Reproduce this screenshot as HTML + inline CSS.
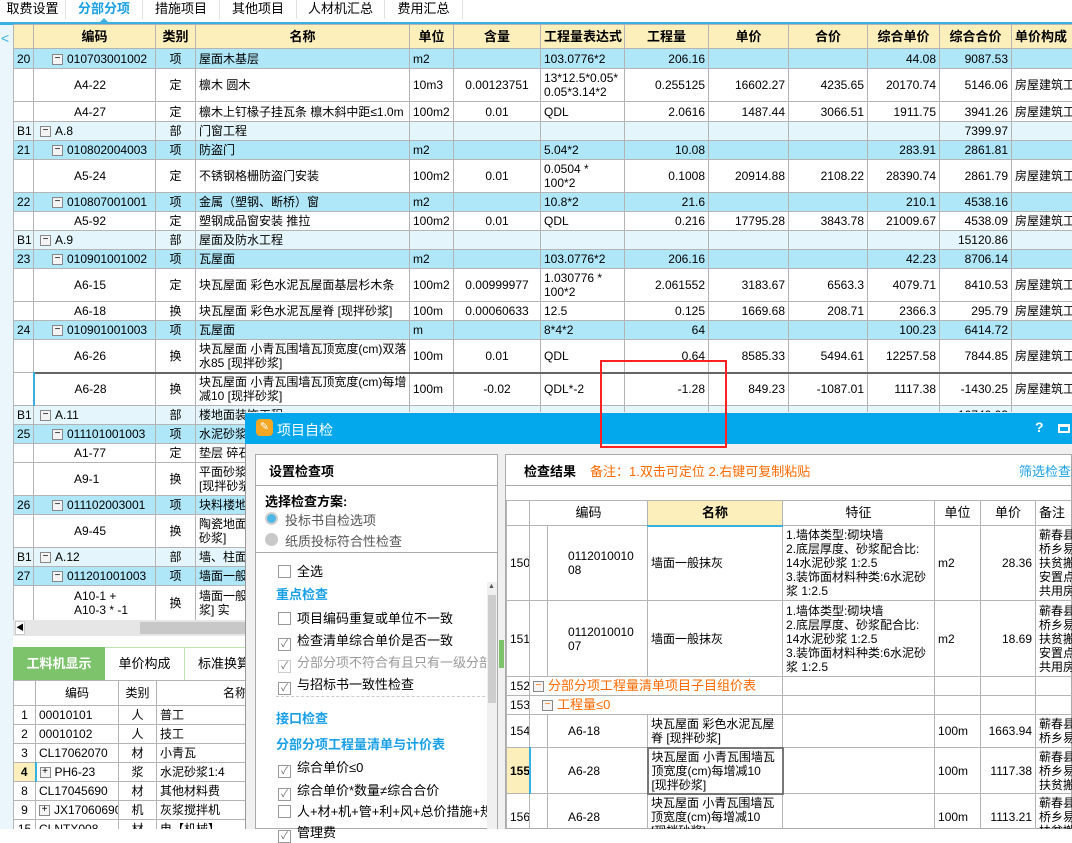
<!DOCTYPE html>
<html><head><meta charset="utf-8">
<style>
*{margin:0;padding:0;box-sizing:border-box}
body{width:1072px;height:829px;overflow:hidden;background:#fff;font-family:"Liberation Sans","Noto Sans CJK SC",sans-serif;font-size:12px;color:#000;position:relative}
.a{position:absolute}
table{border-collapse:collapse;table-layout:fixed}
td{border:1px solid #b4b4b4;padding:0 3px;white-space:nowrap;overflow:hidden;line-height:14px;vertical-align:middle}
.r{text-align:right}.c{text-align:center}
.hd td{background:#fdefbb;font-weight:bold;text-align:center;font-size:13px}
.x td{background:#afe6f8}
.b td{background:#e4f6fb}
.bx{display:inline-block;width:11px;height:11px;border:1px solid #888;background:#f4f4f4;font-size:10px;line-height:8px;text-align:center;vertical-align:middle;margin-right:4px}
.tab{position:absolute;top:0;height:19px;font-size:13px;text-align:center;line-height:17px;border-right:1px solid #e0e0e0}
.cb{display:inline-block;width:13px;height:13px;border:1px solid #999;background:#fff;vertical-align:-2px;margin-right:6px;font-size:10px;line-height:11px;text-align:center;color:#666}
.li{position:absolute;left:278px;font-size:13px}
.bl{position:absolute;left:276px;font-size:13px;font-weight:bold;color:#1aa0e6}
</style></head><body>
<div class="a" style="left:0;top:0;width:1072px;height:22px;background:#fff"></div>
<div class="tab" style="left:0;width:66px">取费设置</div>
<div class="tab" style="left:66px;width:77px;color:#1aa0e6;font-weight:bold">分部分项</div>
<div class="tab" style="left:143px;width:77px">措施项目</div>
<div class="tab" style="left:220px;width:77px">其他项目</div>
<div class="tab" style="left:297px;width:88px">人材机汇总</div>
<div class="tab" style="left:385px;width:78px">费用汇总</div>
<div class="a" style="left:0;top:22px;width:1072px;height:3px;background:#3ab0e0"></div>
<div class="a" style="left:99px;top:18px;width:0;height:0;border-left:5px solid transparent;border-right:5px solid transparent;border-bottom:5px solid #3ab0e0"></div>
<div class="a" style="left:0;top:25px;width:13px;height:804px;background:#eaf6fb"></div>
<div class="a" style="left:1px;top:30px;color:#3ab0e0;font-size:14px">&lt;</div>

<div class="a" style="left:13px;top:24px;width:1059px;height:612px;overflow:hidden">
<table style="width:1110px">
<colgroup><col style="width:20px"><col style="width:122px"><col style="width:40px"><col style="width:214px"><col style="width:44px"><col style="width:87px"><col style="width:84px"><col style="width:84px"><col style="width:80px"><col style="width:79px"><col style="width:72px"><col style="width:72px"><col style="width:132px"></colgroup>
<tr class="hd" style="height:24px"><td></td><td>编码</td><td>类别</td><td>名称</td><td>单位</td><td>含量</td><td>工程量表达式</td><td>工程量</td><td>单价</td><td>合价</td><td>综合单价</td><td>综合合价</td><td style="text-align:left">单价构成</td></tr>
<tr class="x" style="height:20px"><td>20</td><td style="padding-left:18px"><span class="bx">−</span>010703001002</td><td class="c">项</td><td>屋面木基层</td><td>m2</td><td></td><td>103.0776*2</td><td class="r">206.16</td><td></td><td></td><td class="r">44.08</td><td class="r">9087.53</td><td></td></tr>
<tr style="height:33px"><td></td><td style="padding-left:40px">A4-22</td><td class="c">定</td><td>檩木 圆木</td><td>10m3</td><td class="c">0.00123751</td><td>13*12.5*0.05*<br>0.05*3.14*2</td><td class="r">0.255125</td><td class="r">16602.27</td><td class="r">4235.65</td><td class="r">20170.74</td><td class="r">5146.06</td><td>房屋建筑工</td></tr>
<tr style="height:20px"><td></td><td style="padding-left:40px">A4-27</td><td class="c">定</td><td>檩木上钉椽子挂瓦条 檩木斜中距≤1.0m</td><td>100m2</td><td class="c">0.01</td><td>QDL</td><td class="r">2.0616</td><td class="r">1487.44</td><td class="r">3066.51</td><td class="r">1911.75</td><td class="r">3941.26</td><td>房屋建筑工</td></tr>
<tr class="b" style="height:19px"><td>B1</td><td style="padding-left:6px"><span class="bx">−</span>A.8</td><td class="c">部</td><td>门窗工程</td><td></td><td></td><td></td><td></td><td></td><td></td><td></td><td class="r">7399.97</td><td></td></tr>
<tr class="x" style="height:19px"><td>21</td><td style="padding-left:18px"><span class="bx">−</span>010802004003</td><td class="c">项</td><td>防盗门</td><td>m2</td><td></td><td>5.04*2</td><td class="r">10.08</td><td></td><td></td><td class="r">283.91</td><td class="r">2861.81</td><td></td></tr>
<tr style="height:33px"><td></td><td style="padding-left:40px">A5-24</td><td class="c">定</td><td>不锈钢格栅防盗门安装</td><td>100m2</td><td class="c">0.01</td><td>0.0504 *<br>100*2</td><td class="r">0.1008</td><td class="r">20914.88</td><td class="r">2108.22</td><td class="r">28390.74</td><td class="r">2861.79</td><td>房屋建筑工</td></tr>
<tr class="x" style="height:19px"><td>22</td><td style="padding-left:18px"><span class="bx">−</span>010807001001</td><td class="c">项</td><td>金属（塑钢、断桥）窗</td><td>m2</td><td></td><td>10.8*2</td><td class="r">21.6</td><td></td><td></td><td class="r">210.1</td><td class="r">4538.16</td><td></td></tr>
<tr style="height:19px"><td></td><td style="padding-left:40px">A5-92</td><td class="c">定</td><td>塑钢成品窗安装 推拉</td><td>100m2</td><td class="c">0.01</td><td>QDL</td><td class="r">0.216</td><td class="r">17795.28</td><td class="r">3843.78</td><td class="r">21009.67</td><td class="r">4538.09</td><td>房屋建筑工</td></tr>
<tr class="b" style="height:19px"><td>B1</td><td style="padding-left:6px"><span class="bx">−</span>A.9</td><td class="c">部</td><td>屋面及防水工程</td><td></td><td></td><td></td><td></td><td></td><td></td><td></td><td class="r">15120.86</td><td></td></tr>
<tr class="x" style="height:19px"><td>23</td><td style="padding-left:18px"><span class="bx">−</span>010901001002</td><td class="c">项</td><td>瓦屋面</td><td>m2</td><td></td><td>103.0776*2</td><td class="r">206.16</td><td></td><td></td><td class="r">42.23</td><td class="r">8706.14</td><td></td></tr>
<tr style="height:33px"><td></td><td style="padding-left:40px">A6-15</td><td class="c">定</td><td>块瓦屋面 彩色水泥瓦屋面基层杉木条</td><td>100m2</td><td class="c">0.00999977</td><td>1.030776 *<br>100*2</td><td class="r">2.061552</td><td class="r">3183.67</td><td class="r">6563.3</td><td class="r">4079.71</td><td class="r">8410.53</td><td>房屋建筑工</td></tr>
<tr style="height:19px"><td></td><td style="padding-left:40px">A6-18</td><td class="c">换</td><td>块瓦屋面 彩色水泥瓦屋脊 [现拌砂浆]</td><td>100m</td><td class="c">0.00060633</td><td>12.5</td><td class="r">0.125</td><td class="r">1669.68</td><td class="r">208.71</td><td class="r">2366.3</td><td class="r">295.79</td><td>房屋建筑工</td></tr>
<tr class="x" style="height:19px"><td>24</td><td style="padding-left:18px"><span class="bx">−</span>010901001003</td><td class="c">项</td><td>瓦屋面</td><td>m</td><td></td><td>8*4*2</td><td class="r">64</td><td></td><td></td><td class="r">100.23</td><td class="r">6414.72</td><td></td></tr>
<tr style="height:33px"><td></td><td style="padding-left:40px">A6-26</td><td class="c">换</td><td>块瓦屋面 小青瓦围墙瓦顶宽度(cm)双落<br>水85 [现拌砂浆]</td><td>100m</td><td class="c">0.01</td><td>QDL</td><td class="r">0.64</td><td class="r">8585.33</td><td class="r">5494.61</td><td class="r">12257.58</td><td class="r">7844.85</td><td>房屋建筑工</td></tr>
<tr style="height:33px"><td style="background:#fff;border-right:2px solid #3ab0e0"></td><td style="padding-left:40px;border-top:2px solid #666">A6-28</td><td class="c" style="border-top:2px solid #666">换</td><td style="border-top:2px solid #666">块瓦屋面 小青瓦围墙瓦顶宽度(cm)每增<br>减10 [现拌砂浆]</td><td style="border-top:2px solid #666">100m</td><td class="c" style="border-top:2px solid #666">-0.02</td><td style="border-top:2px solid #666">QDL*-2</td><td class="r" style="border-top:2px solid #666">-1.28</td><td class="r" style="border-top:2px solid #666">849.23</td><td class="r" style="border-top:2px solid #666">-1087.01</td><td class="r" style="border-top:2px solid #666">1117.38</td><td class="r" style="border-top:2px solid #666">-1430.25</td><td style="border-top:2px solid #666">房屋建筑工</td></tr>
<tr class="b" style="height:19px"><td>B1</td><td style="padding-left:6px"><span class="bx">−</span>A.11</td><td class="c">部</td><td>楼地面装饰工程</td><td></td><td></td><td></td><td></td><td></td><td></td><td></td><td class="r">10740.03</td><td></td></tr>
<tr class="x" style="height:19px"><td>25</td><td style="padding-left:18px"><span class="bx">−</span>011101001003</td><td class="c">项</td><td>水泥砂浆楼地面</td><td></td><td></td><td></td><td></td><td></td><td></td><td></td><td></td><td></td></tr>
<tr style="height:19px"><td></td><td style="padding-left:40px">A1-77</td><td class="c">定</td><td>垫层 碎石</td><td></td><td></td><td></td><td></td><td></td><td></td><td></td><td></td><td></td></tr>
<tr style="height:33px"><td></td><td style="padding-left:40px">A9-1</td><td class="c">换</td><td>平面砂浆找平层<br>[现拌砂浆]</td><td></td><td></td><td></td><td></td><td></td><td></td><td></td><td></td><td></td></tr>
<tr class="x" style="height:19px"><td>26</td><td style="padding-left:18px"><span class="bx">−</span>011102003001</td><td class="c">项</td><td>块料楼地面</td><td></td><td></td><td></td><td></td><td></td><td></td><td></td><td></td><td></td></tr>
<tr style="height:33px"><td></td><td style="padding-left:40px">A9-45</td><td class="c">换</td><td>陶瓷地面砖<br>砂浆]</td><td></td><td></td><td></td><td></td><td></td><td></td><td></td><td></td><td></td></tr>
<tr class="b" style="height:19px"><td>B1</td><td style="padding-left:6px"><span class="bx">−</span>A.12</td><td class="c">部</td><td>墙、柱面装饰</td><td></td><td></td><td></td><td></td><td></td><td></td><td></td><td></td><td></td></tr>
<tr class="x" style="height:19px"><td>27</td><td style="padding-left:18px"><span class="bx">−</span>011201001003</td><td class="c">项</td><td>墙面一般抹灰</td><td></td><td></td><td></td><td></td><td></td><td></td><td></td><td></td><td></td></tr>
<tr style="height:35px"><td></td><td style="padding-left:40px">A10-1 +<br>A10-3 * -1</td><td class="c">换</td><td>墙面一般抹灰<br>浆] 实</td><td></td><td></td><td></td><td></td><td></td><td></td><td></td><td></td><td></td></tr>
</table></div>
<div class="a" style="left:13px;top:620px;width:232px;height:16px;background:#e6e6e6"></div>
<div class="a" style="left:140px;top:622px;width:105px;height:12px;background:#c8c8c8"></div>
<div class="a" style="left:15px;top:621px;width:10px;height:14px;background:#fff;border:1px solid #ccc;font-size:8px;line-height:12px;text-align:center">◀</div>

<div class="a" style="left:13px;top:647px;width:232px;height:34px;background:#fff;border-top:1px solid #bde5b2;border-bottom:1px solid #bde5b2"></div>
<div class="a" style="left:13px;top:647px;width:92px;height:34px;background:#7dc36b;color:#fff;font-weight:bold;font-size:13px;line-height:34px;text-align:center">工料机显示</div>
<div class="a" style="left:105px;top:647px;width:80px;height:34px;line-height:34px;text-align:center;font-size:13px;border-right:1px solid #bde5b2">单价构成</div>
<div class="a" style="left:198px;top:647px;line-height:34px;font-size:13px">标准换算</div>
<div class="a" style="left:13px;top:680px;width:232px;height:149px;overflow:hidden">
<table style="width:300px">
<colgroup><col style="width:22px"><col style="width:83px"><col style="width:38px"><col style="width:157px"></colgroup>
<tr style="height:25px"><td></td><td class="c">编码</td><td class="c">类别</td><td class="c">名称</td></tr>
<tr style="height:19px"><td class="c">1</td><td>00010101</td><td class="c">人</td><td>普工</td></tr>
<tr style="height:19px"><td class="c">2</td><td>00010102</td><td class="c">人</td><td>技工</td></tr>
<tr style="height:19px"><td class="c">3</td><td>CL17062070</td><td class="c">材</td><td>小青瓦</td></tr>
<tr style="height:19px"><td class="c" style="background:#fdefbb;font-weight:bold;border-right:2px solid #3ab0e0">4</td><td><span class="bx">+</span>PH6-23</td><td class="c">浆</td><td>水泥砂浆1:4</td></tr>
<tr style="height:19px"><td class="c">8</td><td>CL17045690</td><td class="c">材</td><td>其他材料费</td></tr>
<tr style="height:19px"><td class="c">9</td><td><span class="bx">+</span>JX17060690</td><td class="c">机</td><td>灰浆搅拌机</td></tr>
<tr style="height:19px"><td class="c">15</td><td>CLNTX008</td><td class="c">材</td><td>电【机械】</td></tr>
</table></div>

<div class="a" style="left:600px;top:360px;width:127px;height:88px;border:2px solid #f22;z-index:5"></div>

<div class="a" style="left:245px;top:412px;width:827px;height:417px;background:#f0f0f0;border-left:1px solid #999"></div>
<div class="a" style="left:245px;top:413px;width:827px;height:31px;background:#03a7ec"></div>
<div class="a" style="left:256px;top:419px;width:17px;height:17px;background:#f5a623;border-radius:4px;color:#fff;font-size:11px;text-align:center;line-height:17px">✎</div>
<div class="a" style="left:277px;top:420px;color:#fff;font-size:14px">项目自检</div>
<div class="a" style="left:1035px;top:419px;color:#fff;font-size:14px;font-weight:bold">?</div>
<div class="a" style="left:1058px;top:424px;width:12px;height:9px;border:2px solid #fff;border-top-width:3px"></div>

<div class="a" style="left:255px;top:454px;width:243px;height:375px;background:#fff;border:1px solid #aaa"></div>
<div class="a" style="left:255px;top:485px;width:243px;height:1px;background:#aaa"></div>
<div class="a" style="left:255px;top:552px;width:243px;height:1px;background:#aaa"></div>
<div class="a" style="left:269px;top:461px;font-size:13px;font-weight:bold">设置检查项</div>
<div class="a" style="left:265px;top:491px;font-size:13px;font-weight:bold">选择检查方案:</div>
<div class="a" style="left:265px;top:512px;width:13px;height:13px;border-radius:50%;background:#4fb7e6;border:2px solid #d0d0d0"></div>
<div class="a" style="left:285px;top:510px;font-size:13px;color:#555">投标书自检选项</div>
<div class="a" style="left:265px;top:533px;width:13px;height:13px;border-radius:50%;background:#c8c8c8"></div>
<div class="a" style="left:285px;top:531px;font-size:13px;color:#555">纸质投标符合性检查</div>
<div class="li" style="top:561px"><span class="cb"></span>全选</div>
<div class="bl" style="top:584px">重点检查</div>
<div class="li" style="top:608px"><span class="cb"></span>项目编码重复或单位不一致</div>
<div class="li" style="top:630px"><span class="cb">✓</span>检查清单综合单价是否一致</div>
<div class="li" style="top:652px;color:#999"><span class="cb" style="border-color:#ccc">✓</span>分部分项不符合有且只有一级分部</div>
<div class="li" style="top:674px"><span class="cb">✓</span>与招标书一致性检查</div>
<div class="a" style="left:276px;top:696px;width:214px;border-top:1px dashed #ccc"></div>
<div class="bl" style="top:708px">接口检查</div>
<div class="bl" style="top:734px">分部分项工程量清单与计价表</div>
<div class="li" style="top:757px"><span class="cb">✓</span>综合单价≤0</div>
<div class="li" style="top:780px"><span class="cb">✓</span>综合单价*数量≠综合合价</div>
<div class="li" style="top:801px;width:210px;overflow:hidden;white-space:nowrap"><span class="cb"></span>人+材+机+管+利+风+总价措施+规费+增</div>
<div class="li" style="top:822px"><span class="cb">✓</span>管理费</div>
<div class="a" style="left:487px;top:582px;width:10px;height:247px;background:#f0f0f0"></div>
<div class="a" style="left:488px;top:595px;width:8px;height:108px;background:#cdcdcd"></div>
<div class="a" style="left:488px;top:583px;font-size:7px;color:#555">▲</div>
<div class="a" style="left:499px;top:640px;width:5px;height:28px;background:#7dc36b"></div>

<div class="a" style="left:505px;top:454px;width:567px;height:375px;background:#fff;border:1px solid #aaa"></div>
<div class="a" style="left:505px;top:485px;width:567px;height:1px;background:#aaa"></div>
<div class="a" style="left:524px;top:461px;font-size:13px;font-weight:bold">检查结果</div>
<div class="a" style="left:590px;top:461px;font-size:13px;color:#ff6a00">备注：1.双击可定位 2.右键可复制粘贴</div>
<div class="a" style="left:1019px;top:461px;font-size:13px;color:#1aa0e6;white-space:nowrap">筛选检查结果</div>
<div class="a" style="left:506px;top:500px;width:566px;height:329px;overflow:hidden">
<table style="width:630px">
<colgroup><col style="width:23px"><col style="width:18px"><col style="width:100px"><col style="width:135px"><col style="width:152px"><col style="width:46px"><col style="width:55px"><col style="width:101px"></colgroup>
<tr style="height:25px"><td></td><td colspan="2" class="c" style="font-size:13px">编码</td><td class="c" style="background:#fdefbb;font-weight:bold;font-size:13px;border-bottom:2px solid #3ab0e0">名称</td><td class="c" style="font-size:13px">特征</td><td class="c" style="font-size:13px">单位</td><td class="c" style="font-size:13px">单价</td><td style="font-size:13px">备注</td></tr>
<tr style="height:75px"><td>150</td><td></td><td style="padding-left:20px">0112010010<br>08</td><td>墙面一般抹灰</td><td style="line-height:14px">1.墙体类型:砌块墙<br>2.底层厚度、砂浆配合比:<br>14水泥砂浆 1:2.5<br>3.装饰面材料种类:6水泥砂<br>浆 1:2.5</td><td>m2</td><td class="r">28.36</td><td>蕲春县<br>桥乡易<br>扶贫搬<br>安置点<br>共用房</td></tr>
<tr style="height:76px"><td>151</td><td></td><td style="padding-left:20px">0112010010<br>07</td><td>墙面一般抹灰</td><td>1.墙体类型:砌块墙<br>2.底层厚度、砂浆配合比:<br>14水泥砂浆 1:2.5<br>3.装饰面材料种类:6水泥砂<br>浆 1:2.5</td><td>m2</td><td class="r">18.69</td><td>蕲春县<br>桥乡易<br>扶贫搬<br>安置点<br>共用房</td></tr>
<tr style="height:19px"><td>152</td><td colspan="3" style="color:#ff6a00;font-size:13px"><span class="bx">−</span>分部分项工程量清单项目子目组价表</td><td></td><td></td><td></td><td></td></tr>
<tr style="height:19px"><td>153</td><td colspan="3" style="color:#ff6a00;font-size:13px;padding-left:12px"><span class="bx">−</span>工程量≤0</td><td></td><td></td><td></td><td></td></tr>
<tr style="height:33px"><td>154</td><td></td><td style="padding-left:20px">A6-18</td><td>块瓦屋面 彩色水泥瓦屋<br>脊 [现拌砂浆]</td><td></td><td>100m</td><td class="r">1663.94</td><td>蕲春县<br>桥乡易</td></tr>
<tr style="height:46px"><td style="background:#fdefbb;font-weight:bold;border-right:2px solid #3ab0e0">155</td><td></td><td style="padding-left:20px">A6-28</td><td style="border:2px solid #777">块瓦屋面 小青瓦围墙瓦<br>顶宽度(cm)每增减10<br> [现拌砂浆]</td><td></td><td>100m</td><td class="r">1117.38</td><td>蕲春县<br>桥乡易<br>扶贫搬</td></tr>
<tr style="height:46px"><td>156</td><td></td><td style="padding-left:20px">A6-28</td><td>块瓦屋面 小青瓦围墙瓦<br>顶宽度(cm)每增减10<br> [现拌砂浆]</td><td></td><td>100m</td><td class="r">1113.21</td><td>蕲春县<br>桥乡易<br>扶贫搬</td></tr>
</table></div>
</body></html>
